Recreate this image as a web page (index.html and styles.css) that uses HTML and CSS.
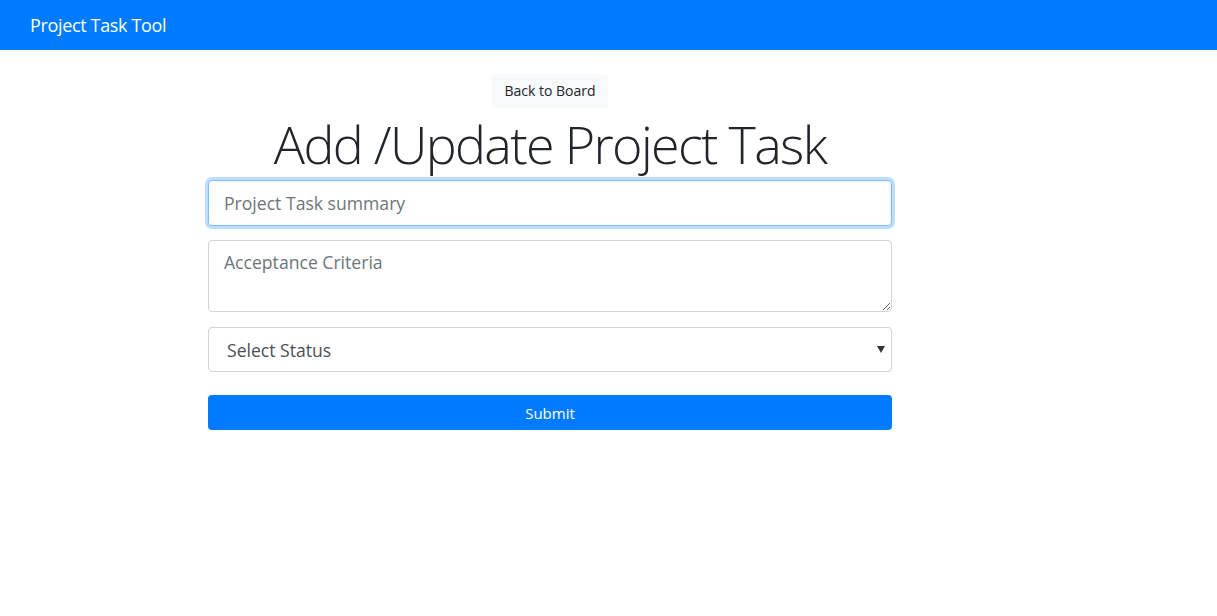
FILE: index.html
```html
<!DOCTYPE html>
<html lang="en">
<head>
<meta charset="utf-8">
<title>Project Task Tool</title>
<link rel="stylesheet" href="styles.css">
</head>
<body>
<nav class="navbar">
  <a class="brand" href="#">Project Task Tool</a>
</nav>
<main class="page">
  <div class="back-row">
    <a class="btn-light" href="#">Back to Board</a>
  </div>
  <h1 class="title">Add /Update Project Task</h1>
  <form class="task-form">
    <input class="field field-focus" type="text" placeholder="Project Task summary">
    <textarea class="field area" placeholder="Acceptance Criteria"></textarea>
    <div class="select-wrap">
      <select class="field select">
        <option>Select Status</option>
        <option>TO DO</option>
        <option>IN PROGRESS</option>
        <option>DONE</option>
      </select>
      <span class="caret"></span>
    </div>
    <button class="btn-submit" type="button">Submit</button>
  </form>
</main>
</body>
</html>
```
FILE: styles.css
```css
* { box-sizing: border-box; }
html, body { margin: 0; padding: 0; }
body {
  font-family: "Open Sans", "Noto Sans", "Liberation Sans", sans-serif;
  font-size: 16px;
  line-height: 1.5;
  color: #212529;
  background: #fff;
}
.navbar {
  height: 50px;
  background: #007bff;
  display: flex;
  align-items: center;
  padding: 0 30px;
}
.brand {
  color: #fff;
  text-decoration: none;
  font-size: 18px;
  letter-spacing: -0.35px;
  line-height: 1;
}
.page {
  width: 684px;
  margin-left: 208px;
  padding-top: 24px;
}
.back-row { text-align: center; }
.btn-light {
  display: inline-block;
  height: 34px;
  line-height: 34px;
  padding: 0 12px;
  background: #f8f9fa;
  color: #212529;
  font-size: 14px;
  border-radius: 4px;
  text-decoration: none;
}
.title {
  margin: 0;
  text-align: center;
  font-size: 52px;
  font-weight: 300;
  letter-spacing: -1.65px;
  line-height: 72px;
  color: #212529;
}
.task-form { display: flex; flex-direction: column; }
.field {
  display: block;
  width: 100%;
  font-family: inherit;
  font-size: 17.6px;
  color: #495057;
  background: #fff;
  border: 1px solid #ced4da;
  border-radius: 4px;
  padding: 0 15px;
  outline: none;
}
.field::placeholder { color: #6c757d; opacity: 1; }
.field-focus {
  height: 46px;
  border-color: #80bdff;
  box-shadow: 0 0 0 3px rgba(0, 123, 255, 0.25);
  margin-bottom: 14px;
}
.area {
  height: 72px;
  padding-top: 8px;
  resize: vertical;
  margin-bottom: 15px;
  line-height: 1.5;
}
.select-wrap { position: relative; margin-bottom: 23px; }
.select {
  height: 45px;
  appearance: none;
  -webkit-appearance: none;
  padding-left: 18px;
  color: #495057;
}
.caret {
  position: absolute;
  right: 7px;
  top: 19px;
  width: 0;
  height: 0;
  border-left: 4px solid transparent;
  border-right: 4px solid transparent;
  border-top: 7px solid #333;
  pointer-events: none;
}
.btn-submit {
  height: 35px;
  width: 100%;
  background: #007bff;
  color: #fff;
  border: 0;
  border-radius: 4px;
  font-family: inherit;
  font-size: 15px;
}
```
